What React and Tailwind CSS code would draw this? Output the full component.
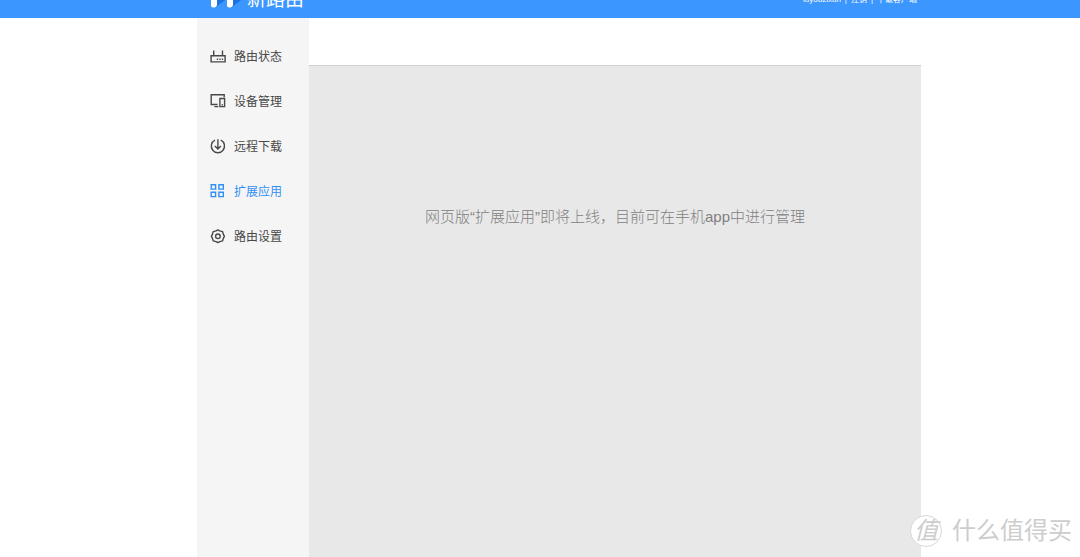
const line = { fill: 'none', stroke: 'currentColor', strokeWidth: 1.4 };

function RouterIcon() {
  return (
    <svg className="size-4 shrink-0" viewBox="0 0 16 16" {...line}>
      <path d="M1.1 6.7h14v6.2h-14zM3.7 1.4v5.3M12.5 1.4v5.3" />
      <path d="M6.8 10.3h1.3M9.3 10.3h1.3M11.8 10.3h1.3" />
    </svg>
  );
}

function DevicesIcon() {
  return (
    <svg className="size-4 shrink-0" viewBox="0 0 16 16" {...line}>
      <path d="M14.2 3.2V.7H1.2v9.8h6.4M4.4 12.6h4M9.9 4.5h4.7v8.1H9.9zM11.7 10.7h1.2" />
    </svg>
  );
}

function DownloadIcon() {
  return (
    <svg className="size-4 shrink-0" viewBox="0 0 16 16" {...line}>
      <path d="M5 1.2a6.6 6.6 0 1 0 5.8 0M7.9.2v9.6M4.9 7l3 3 3-3" />
    </svg>
  );
}

function AppsIcon() {
  return (
    <svg className="size-4 shrink-0" viewBox="0 0 16 16" {...line}>
      <path d="M1.2.7h4.4v4.4H1.2zM8.9.7h4.4v4.4H8.9zM1.2 8.2h4.4v4.4H1.2zM8.9 8.2h4.4v4.4H8.9z" />
    </svg>
  );
}

function SettingsIcon() {
  return (
    <svg className="size-4 shrink-0" viewBox="0 0 16 16" {...line} strokeLinejoin="round">
      <path d="M7.9.9l1.8 1 2.9.8.8 2.7 1 1.9-1 1.9-.8 2.7-2.9.8-1.8 1-1.8-1-2.9-.8-.8-2.7-1-1.9 1-1.9.8-2.7 2.9-.8z" />
      <circle cx="7.9" cy="7.3" r="2.3" />
    </svg>
  );
}

const items = [
  { label: '路由状态', Icon: RouterIcon },
  { label: '设备管理', Icon: DevicesIcon },
  { label: '远程下载', Icon: DownloadIcon },
  { label: '扩展应用', Icon: AppsIcon, active: true },
  { label: '路由设置', Icon: SettingsIcon },
];

function Header() {
  return (
    <header className="h-[18px] bg-[#3b96fd] pl-[38px] text-white">
      <div className="mx-auto flex h-2 max-w-[724px] items-end justify-between overflow-hidden pr-1 pl-3.5">
        <a href="#home" className="flex items-end gap-1">
          <svg className="h-8 w-8" viewBox="0 0 32 32" fill="currentColor">
            <path fill="#1773e6" d="M5 22h9v2l-9 7zM21 22h9v2l-9 7z" />
            <path d="M0 8h6v20.500q0 2.500-3 3t-3-2zM16 8h6v20.500q0 2.500-3 3t-3-2z" />
          </svg>
          <span className="text-[19px] leading-4">新路由</span>
        </a>
        <nav className="flex gap-1 pb-1 text-[8px] leading-2">
          <a href="#account">luyouzixun</a>
          <span>|</span>
          <a href="#logout">注销</a>
          <span>|</span>
          <a href="#client">下载客户端</a>
        </nav>
      </div>
    </header>
  );
}

function Watermark() {
  return (
    <div className="absolute right-2 bottom-2 flex items-center gap-2.5 text-[#cdcdcd]">
      <span className="flex size-8 items-center justify-center rounded-full border border-[#d8d8d8] bg-white text-2xl leading-none italic">
        值
      </span>
      <span className="text-2xl leading-9">什么值得买</span>
    </div>
  );
}

export default function App() {
  return (
    <div className="relative flex min-h-screen flex-col bg-white font-['Liberation_Sans','Noto_Sans_CJK_SC',sans-serif]">
      <Header />
      <div className="flex flex-1 pl-[38px]">
        <div className="mx-auto flex w-full max-w-[724px]">
          <nav className="w-28 shrink-0 bg-[#f5f5f5] pt-4">
            {items.map(({ label, Icon, active }) => (
              <a
                key={label}
                href={'#' + label}
                className={'flex h-[45px] items-center gap-2 pl-[13px] text-xs ' + (active ? 'text-[#3290f5]' : 'text-[#484848]')}
              >
                <Icon />
                {label}
              </a>
            ))}
          </nav>
          <main className="flex flex-1 flex-col pt-[47px]">
            <div className="flex-1 border-t border-[#d2d2d2] bg-[#e8e8e8] pt-[139px] text-center">
              <p className="text-[15px] leading-6 font-light text-[#808080]">
                网页版“扩展应用”即将上线，目前可在手机app中进行管理
              </p>
            </div>
          </main>
        </div>
      </div>
      <Watermark />
    </div>
  );
}
